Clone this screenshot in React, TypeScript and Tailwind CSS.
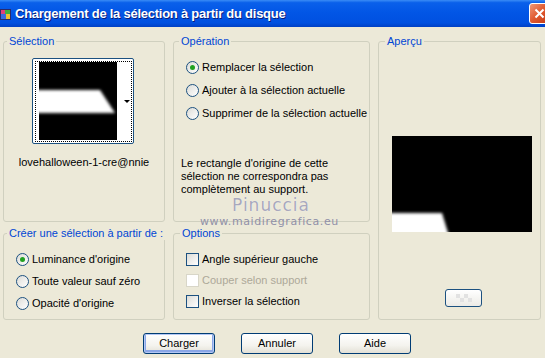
import type { ReactNode } from "react";

const Radio = ({ checked, label }: { checked?: boolean; label: string }) => (
  <div className="flex h-[13px] items-center gap-[3px]">
    <span className="flex h-[13px] w-[13px] items-center justify-center rounded-full border border-[#1C5180] bg-[linear-gradient(135deg,#DCDCD7,#FFFFFF)]">
      {checked && <span className="h-[5px] w-[5px] rounded-full bg-[#21A121]" />}
    </span>
    <span>{label}</span>
  </div>
);

const Check = ({ label, disabled }: { label: string; disabled?: boolean }) => (
  <div className={`flex h-[13px] items-center gap-[3px] ${disabled ? "text-[#ACA899]" : ""}`}>
    <span
      className={`h-[13px] w-[13px] border ${
        disabled
          ? "border-[#D8D6C8] bg-white"
          : "border-[#1C5180] bg-[linear-gradient(135deg,#DCDCD7,#FFFFFF)]"
      }`}
    />
    <span>{label}</span>
  </div>
);

const Group = ({
  title,
  offset,
  className,
  children,
}: {
  title: string;
  offset: string;
  className?: string;
  children: ReactNode;
}) => (
  <fieldset className={`h-full min-w-0 rounded-[3px] border border-[#D0D0BF] ${className ?? ""}`}>
    <legend className={`whitespace-nowrap px-[2px] leading-[13px] text-[#0046D5] ${offset}`}>{title}</legend>
    {children}
  </fieldset>
);

const Button = ({ label, isDefault }: { label: string; isDefault?: boolean }) => (
  <button
    className={`h-[21px] w-[72px] rounded-[3px] border border-[#003C74] bg-[linear-gradient(to_bottom,#FFFFFF,#F4F3EE_60%,#E3E0D6)] text-black ${
      isDefault ? "shadow-[inset_0_0_0_1px_#B4C8F5,inset_0_-1px_0_2px_#8AA6E6]" : ""
    }`}
  >
    {label}
  </button>
);

export default function App() {
  return (
    <div className="relative flex h-[358px] w-[545px] flex-col overflow-hidden bg-[#ECE9D8] font-['Liberation_Sans',Arial,sans-serif] text-[11px] text-black">
      {/* title bar */}
      <div className="flex h-[27px] shrink-0 items-center bg-[linear-gradient(to_bottom,#3A8CF6_0%,#0A60EA_10%,#0256E6_45%,#0050E0_85%,#0040C4_100%)]">
        <svg width="12" height="13" viewBox="0 0 12 13" className="ml-0 mt-[1px]">
          <rect x="0" y="1" width="11" height="11" fill="#2a2a6a" />
          <rect x="1" y="2" width="4" height="4" fill="#e0407a" />
          <rect x="5" y="2" width="5" height="4" fill="#40b040" />
          <rect x="1" y="6" width="5" height="5" fill="#3a6ae0" />
          <rect x="6" y="6" width="4" height="5" fill="#f0c030" />
        </svg>
        <span className="ml-[3px] text-[13px] font-bold tracking-[-0.25px] text-white [text-shadow:1px_1px_0_#0A1E7A]">
          Chargement de la sélection à partir du disque
        </span>
        <div className="ml-auto mr-[-5px] flex h-[21px] w-[21px] items-center justify-center rounded-[3px] border border-white bg-[linear-gradient(135deg,#F09878,#E0582E_50%,#C23A14)]">
          <svg width="11" height="11" viewBox="0 0 11 11">
            <path d="M1.5 1.5 L9.5 9.5 M9.5 1.5 L1.5 9.5" stroke="white" strokeWidth="2" />
          </svg>
        </div>
      </div>

      {/* groups */}
      <div className="grid grid-cols-[162px_197px_163px] grid-rows-[187px_93px] gap-x-[8px] gap-y-[5px] pl-[3px] pt-[8px]">
        <Group title="Sélection" offset="ml-[3px]">
          <div className="ml-[28px] mt-[10px] h-[86px] w-[102px] rounded-[2px] border border-[#1C5180] bg-white pb-[1px] pl-[2px] pr-[1px] pt-[2px]">
            <div className="flex h-full border border-dotted border-black pl-[3px]">
              <svg width="78" height="78" viewBox="0 0 78 78">
                <defs>
                  <filter id="b1">
                    <feGaussianBlur stdDeviation="1.4" />
                  </filter>
                </defs>
                <rect width="78" height="78" fill="black" />
                <polygon points="-4,28 61,28 76,51 -4,51" fill="white" filter="url(#b1)" />
              </svg>
              <div className="flex flex-1 items-center justify-end pr-[1px]">
                <span className="border-x-[3px] border-t-[3px] border-x-transparent border-t-black" />
              </div>
            </div>
          </div>
          <div className="mt-[10px] text-center">lovehalloween-1-cre@nnie</div>
        </Group>

        <Group title="Opération" offset="ml-[5px]">
          <div className="ml-[12px] mt-[13px] flex flex-col gap-[10px]">
            <Radio checked label="Remplacer la sélection" />
            <Radio label="Ajouter à la sélection actuelle" />
            <Radio label="Supprimer de la sélection actuelle" />
          </div>
          <p className="ml-[7px] mt-[37px] leading-[13px]">
            Le rectangle d'origine de cette
            <br />
            sélection ne correspondra pas
            <br />
            complètement au support.
          </p>
        </Group>

        <Group title="Aperçu" offset="ml-[6px]" className="row-span-2">
          <svg width="140" height="96" viewBox="0 0 140 96" className="ml-[13px] mt-[88px] block">
            <defs>
              <filter id="b2">
                <feGaussianBlur stdDeviation="1.4" />
              </filter>
            </defs>
            <rect width="140" height="96" fill="black" />
            <polygon points="-4,77 50,77 57,100 -4,100" fill="white" filter="url(#b2)" />
          </svg>
          <div className="ml-[66px] mt-[57px] flex h-[18px] w-[37px] items-center justify-center rounded-[3px] border border-[#1C5180] bg-[linear-gradient(to_bottom,#FFFFFF,#ECEBE6)]">
            <svg width="16" height="8" viewBox="0 0 16 8">
              <rect x="0" y="0" width="4" height="4" fill="#E2E2E2" />
              <rect x="8" y="0" width="4" height="4" fill="#E2E2E2" />
              <rect x="4" y="4" width="4" height="4" fill="#E2E2E2" />
              <rect x="12" y="4" width="4" height="4" fill="#E2E2E2" />
            </svg>
          </div>
        </Group>

        <Group title="Créer une sélection à partir de :" offset="ml-[3px]">
          <div className="ml-[12px] mt-[13px] flex flex-col gap-[9px]">
            <Radio checked label="Luminance d'origine" />
            <Radio label="Toute valeur sauf zéro" />
            <Radio label="Opacité d'origine" />
          </div>
        </Group>

        <Group title="Options" offset="ml-[6px]">
          <div className="ml-[12px] mt-[13px] flex flex-col gap-[8px]">
            <Check label="Angle supérieur gauche" />
            <Check disabled label="Couper selon support" />
            <Check label="Inverser la sélection" />
          </div>
        </Group>
      </div>

      {/* buttons */}
      <div className="mt-[13px] flex gap-[26px] pl-[143px]">
        <Button isDefault label="Charger" />
        <Button label="Annuler" />
        <Button label="Aide" />
      </div>

      {/* watermark */}
      <div className="pointer-events-none absolute left-[232px] top-[196px] font-['DejaVu_Sans',sans-serif] text-[17px] leading-[18px] tracking-[1px] text-[#A8A8BC] [text-shadow:0_0_1px_#ffffff]">
        Pinuccia
      </div>
      <div className="pointer-events-none absolute left-[200px] top-[216px] font-['DejaVu_Sans',sans-serif] text-[11px] leading-[11px] tracking-[0.6px] text-[#9090A8]">
        www.maidiregrafica.eu
      </div>
    </div>
  );
}
